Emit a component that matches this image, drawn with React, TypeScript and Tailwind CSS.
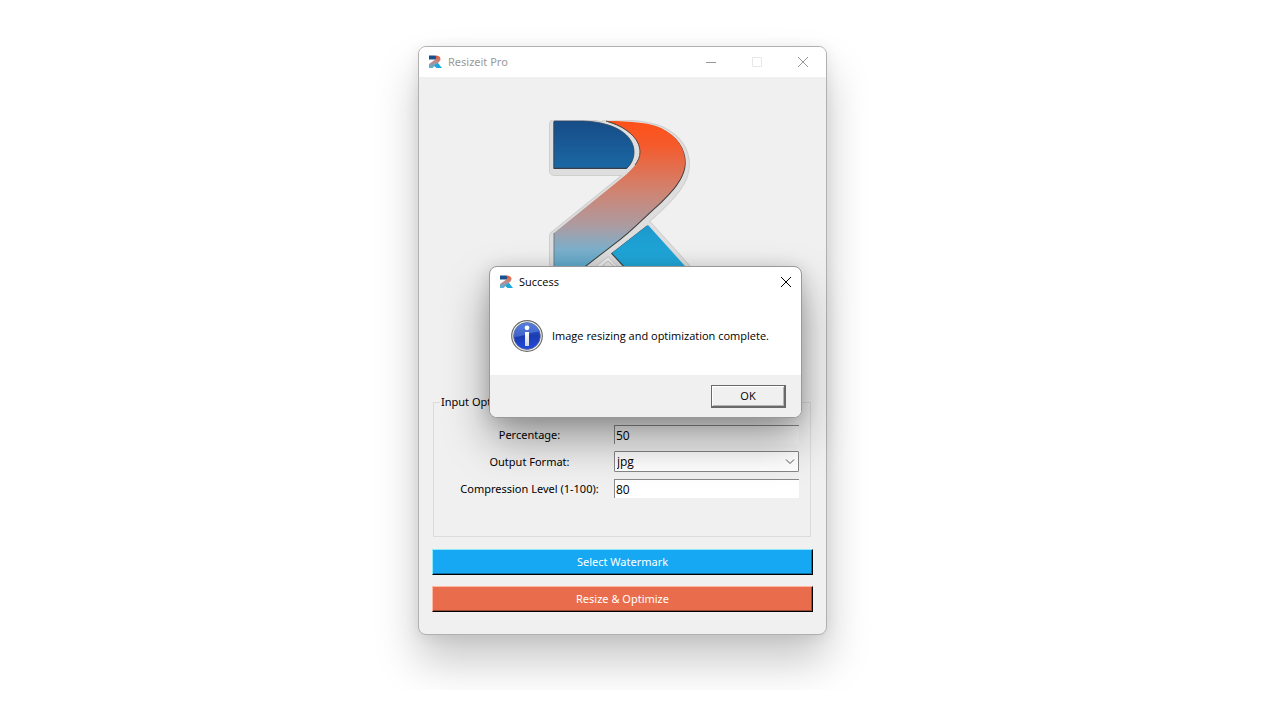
import React, { useState } from 'react';

const LogoIcon = () => (
  <svg viewBox="0 0 14 14" className="h-3.5 w-3.5 shrink-0" aria-hidden="true">
    <defs>
      <linearGradient id="ribbon-small" x1="0" y1="0" x2="0" y2="1">
        <stop offset="0" stopColor="#f0562c" />
        <stop offset="0.5" stopColor="#c08c88" />
        <stop offset="1" stopColor="#4db4dc" />
      </linearGradient>
    </defs>
    <path d="M1 0.500h5c2 0 3.300 1 3.300 2.300L8.300 4.500H1z" fill="#17508c" />
    <path d="M6.500 0.500c4.300 0 6 1.200 6 3.500 0 1.800-1.600 3.200-3.800 5L4.500 13H1V9l6-4.200c2-1.600 1.600-3.400-.5-4.300z" fill="url(#ribbon-small)" />
    <path d="M9.800 7.800l4.200 5.200H8.500L6 10.800z" fill="#1ba9da" />
  </svg>
);

const Logo = () => (
  <svg viewBox="0 0 160 200" className="h-[200px] w-40" role="img" aria-label="Resizeit Pro logo">
    <defs>
      <linearGradient id="bowl" x1="0" y1="0" x2="0" y2="1">
        <stop offset="0" stopColor="#174c88" />
        <stop offset="1" stopColor="#1a68a4" />
      </linearGradient>
      <linearGradient id="ribbon" gradientUnits="userSpaceOnUse" x1="0" y1="11" x2="0" y2="180">
        <stop offset="0" stopColor="#ff5118" />
        <stop offset="0.14" stopColor="#f55a2b" />
        <stop offset="0.42" stopColor="#cf8473" />
        <stop offset="0.62" stopColor="#ac9ba1" />
        <stop offset="0.76" stopColor="#7cb0cb" />
        <stop offset="1" stopColor="#3aa8d6" />
      </linearGradient>
      <linearGradient id="leg" x1="0" y1="0" x2="0" y2="1">
        <stop offset="0" stopColor="#1c98cd" />
        <stop offset="0.4" stopColor="#20a7d9" />
        <stop offset="1" stopColor="#20a7d9" />
      </linearGradient>
      <clipPath id="halo-clip">
        <rect x="0" y="9" width="160" height="191" />
      </clipPath>
      <path id="bowl-shape" d="M11 11H40C72 12 91 25 91 42C91 49 88 54 84 58H11Z" />
      <path id="ribbon-shape" d="M63 11C90 11 107 13 118 18C134 26 142 38 142 52C142 67 130 82 107 102C97 111 87 121 77 129L11 180V123L79 68C91 58 97 51 97 42C97 28 82 16 63 11Z" />
      <path id="leg-shape" d="M105 115L69 143L118 196H178Z" />
    </defs>
    <g clipPath="url(#halo-clip)" transform="translate(0 1)" strokeLinejoin="round">
      <g fill="#cfcfcf" stroke="#cfcfcf" strokeWidth="10">
        <use href="#bowl-shape" y="2" />
        <use href="#ribbon-shape" y="2" />
        <use href="#leg-shape" />
      </g>
      <g fill="#dedede" stroke="#dedede" strokeWidth="8">
        <use href="#bowl-shape" y="2" />
        <use href="#ribbon-shape" y="2" />
        <use href="#leg-shape" />
      </g>
    </g>
    <path d="M56 159L65 151L74 159" fill="#e8e8e8" stroke="#bdbdbd" />
    <g fill="#3b3b3b">
      <use href="#bowl-shape" x="-0.500" y="1" />
      <use href="#ribbon-shape" x="0.700" y="0.700" />
      <use href="#leg-shape" x="-1" y="0.500" />
    </g>
    <g strokeWidth="0.800">
      <use href="#bowl-shape" fill="url(#bowl)" stroke="#31465f" />
      <use href="#ribbon-shape" fill="url(#ribbon)" />
      <use href="#leg-shape" fill="url(#leg)" />
    </g>
    <path d="M63 11C82 16 97 28 97 42C97 47 95 51 92 55" fill="none" stroke="#5b4a47" />
    <path d="M11 123V180" fill="none" stroke="#6b7f8a" />
  </svg>
);

const InfoIcon = () => (
  <svg viewBox="0 0 32 32" className="h-8 w-8 shrink-0" aria-hidden="true">
    <defs>
      <linearGradient id="info-fill" x1="0" y1="0" x2="0" y2="1">
        <stop offset="0" stopColor="#3d69d8" />
        <stop offset="0.5" stopColor="#1b3cb0" />
        <stop offset="1" stopColor="#2148e0" />
      </linearGradient>
      <linearGradient id="info-stem" x1="0" y1="0" x2="0" y2="1">
        <stop offset="0" stopColor="#ffffff" />
        <stop offset="1" stopColor="#d0d4e2" />
      </linearGradient>
    </defs>
    <circle cx="16" cy="16" r="15.300" fill="#f4f4f4" stroke="#6d6d6d" strokeWidth="1.200" />
    <circle cx="16" cy="16" r="13.400" fill="url(#info-fill)" stroke="#63718f" strokeWidth="0.800" />
    <path d="M3 17C2.500 9 8.500 3 16 3c6 0 10.500 3.500 12.300 8.500C20 12 10 17 3 17z" fill="#7aa0f0" opacity="0.400" />
    <circle cx="16" cy="7.800" r="2.400" fill="#fff" />
    <rect x="14" y="12" width="4" height="14" fill="url(#info-stem)" />
  </svg>
);

const CloseIcon = () => (
  <svg viewBox="0 0 12 12" className="h-3 w-3" fill="none" stroke="currentColor" aria-hidden="true">
    <path d="M1 1l10 10M11 1L1 11" />
  </svg>
);

interface DialogProps {
  title: string;
  message: string;
  onClose: () => void;
}

const MessageDialog = ({ title, message, onClose }: DialogProps) => (
  <div
    role="dialog"
    aria-label={title}
    className="absolute left-[70px] top-[219px] w-[313px] rounded-lg border border-[#999] bg-white font-['Open_Sans','Noto_Sans',sans-serif] shadow-[0_22px_44px_rgba(0,0,0,0.36),0_2px_18px_rgba(0,0,0,0.14)]"
  >
    <div className="flex h-[30px] items-center pl-[9px]">
      <LogoIcon />
      <span className="ml-1.5 flex-1">{title}</span>
      <button type="button" aria-label="Close" onClick={onClose} className="flex h-full w-[30px] items-center justify-center">
        <CloseIcon />
      </button>
    </div>
    <div className="flex items-center py-[23px] pl-[21px]">
      <InfoIcon />
      <p className="ml-[9px] whitespace-nowrap">{message}</p>
    </div>
    <div className="flex justify-end rounded-b-[7px] bg-[#f0f0f0] pb-[9px] pr-[15px] pt-2.5">
      <button
        type="button"
        onClick={onClose}
        className="h-[23px] w-[75px] border border-b-2 border-r-2 border-[#696969] shadow-[inset_1px_1px_0_#fff,inset_-1px_-1px_0_#b4b4b4]"
      >
        OK
      </button>
    </div>
  </div>
);

const inputClass = "h-[19px] w-full border-l border-t border-[#888] pl-px pr-1 font-['Open_Sans','Noto_Sans',sans-serif] text-xs outline-none";

function App() {
  const [percentage, setPercentage] = useState('50');
  const [format, setFormat] = useState('jpg');
  const [compression, setCompression] = useState('80');
  const [showDialog, setShowDialog] = useState(true);

  return (
    <main className="flex justify-center overflow-hidden bg-white pb-[55px] pr-[35px] pt-[46px] font-['Noto_Sans','Open_Sans',sans-serif] text-[11px] leading-4 text-black">
      <div className="relative w-full max-w-[409px] rounded-lg border border-[#b0b0b0] bg-[#f0f0f0] shadow-[0_26px_44px_rgba(0,0,0,0.22),0_2px_14px_rgba(0,0,0,0.08)]">
        <header className="flex h-[30px] items-center rounded-t-[7px] bg-white pl-[9px] text-[#999]">
          <LogoIcon />
          <h1 className="ml-1.5 flex-1">Resizeit Pro</h1>
          <button type="button" aria-label="Minimize" className="flex h-full w-[46px] items-center justify-center">
            <span className="h-px w-2.5 bg-[#999]" />
          </button>
          <button type="button" aria-label="Maximize" disabled className="flex h-full w-[46px] items-center justify-center">
            <span className="h-2.5 w-2.5 rounded-[1px] border border-[#e8e8e8]" />
          </button>
          <button type="button" aria-label="Close" className="flex h-full w-[46px] items-center justify-center">
            <CloseIcon />
          </button>
        </header>

        <form className="px-[13px] pb-[22px]" onSubmit={(e) => e.preventDefault()}>
          <div className="flex h-[317px] justify-center pt-[33px]">
            <Logo />
          </div>

          <fieldset className="ml-px mr-0.5 border border-[#dcdcdc] pb-[37px] pl-[17px] pr-[11px] pt-3.5">
            <legend className="-ml-[11px] px-px">Input Options</legend>
            <div className="grid auto-rows-[21px] grid-cols-[1fr_185px] items-center gap-1.5">
              <label htmlFor="percentage" className="text-center">Percentage:</label>
              <input id="percentage" value={percentage} onChange={(e) => setPercentage(e.target.value)} className={`${inputClass} bg-[#f4f4f4]`} />

              <label htmlFor="format" className="text-center">Output Format:</label>
              <div className="relative">
                <select
                  id="format"
                  value={format}
                  onChange={(e) => setFormat(e.target.value)}
                  className="block h-[21px] w-full appearance-none rounded-[1px] border border-[#868686] bg-white pl-0.5 font-['Open_Sans','Noto_Sans',sans-serif] text-xs outline-none"
                >
                  <option value="jpg">jpg</option>
                  <option value="png">png</option>
                  <option value="webp">webp</option>
                </select>
                <svg viewBox="0 0 10 6" className="pointer-events-none absolute right-1 top-2 h-1.5 w-2.5" fill="none" stroke="#555" aria-hidden="true">
                  <path d="M1 0.500l4 4 4-4" />
                </svg>
              </div>

              <label htmlFor="compression" className="whitespace-nowrap text-center">Compression Level (1-100):</label>
              <input id="compression" value={compression} onChange={(e) => setCompression(e.target.value)} className={`${inputClass} bg-white`} />
            </div>
          </fieldset>

          <div className="mt-3 flex flex-col gap-[11px]">
            <button
              type="button"
              className="h-[26px] border border-b-black border-l-[#8ceafc] border-r-black border-t-[#8ceafc] bg-[#17a8f3] text-white shadow-[inset_-1px_-1px_0_#0e70a2]"
            >
              Select Watermark
            </button>
            <button
              type="submit"
              className="h-[26px] border border-b-black border-l-[#ffb8a5] border-r-black border-t-[#ffb8a5] bg-[#e96d4c] text-white shadow-[inset_-1px_-1px_0_#9b4833]"
            >
              Resize &amp; Optimize
            </button>
          </div>
        </form>

        {showDialog && (
          <MessageDialog
            title="Success"
            message="Image resizing and optimization complete."
            onClose={() => setShowDialog(false)}
          />
        )}
      </div>
    </main>
  );
}

export default App;
